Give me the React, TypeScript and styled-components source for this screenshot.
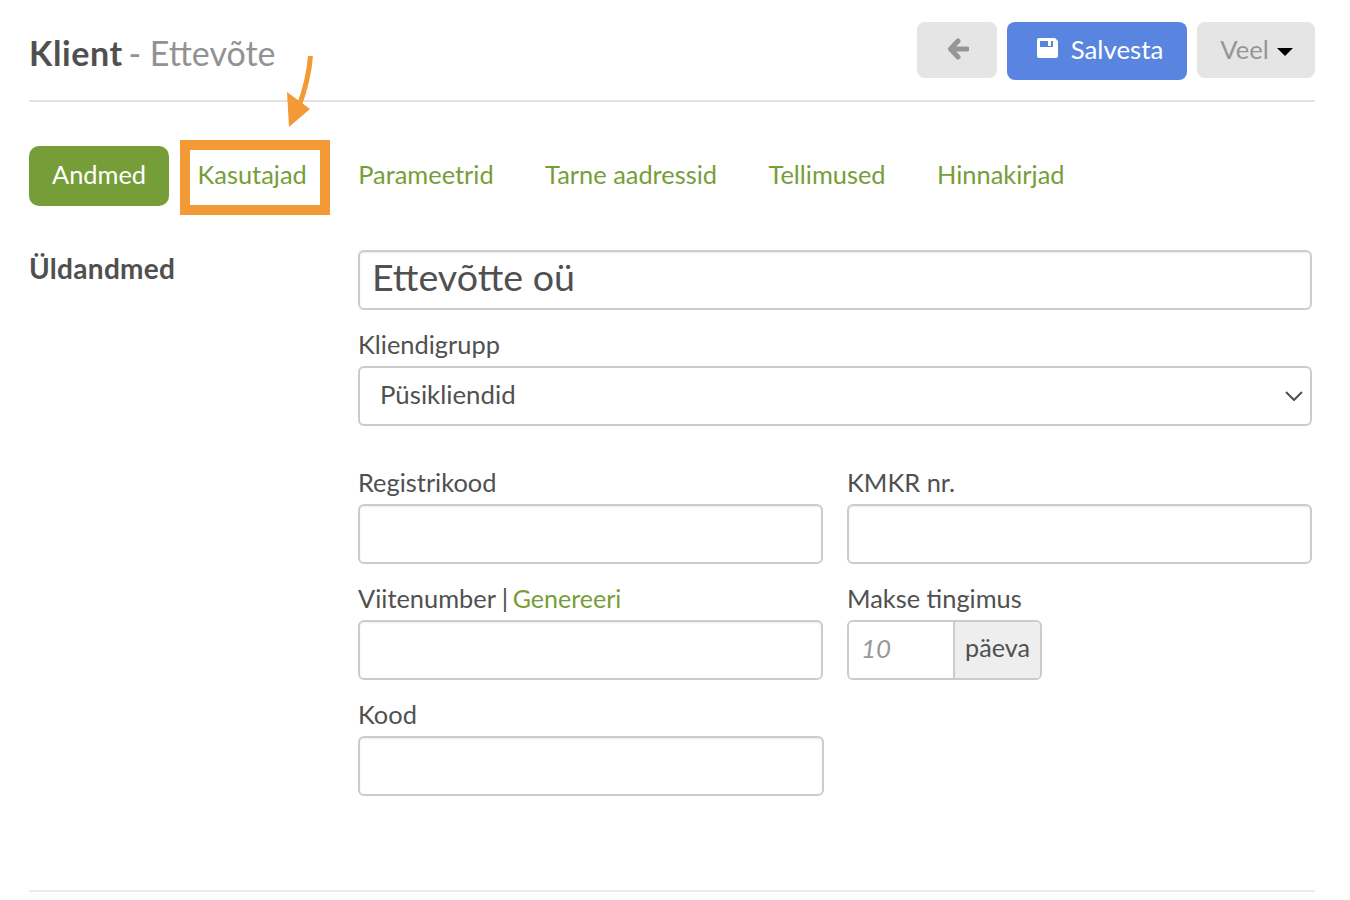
import { createGlobalStyle, styled } from 'styled-components';

const GlobalStyle = createGlobalStyle`
  html, body {
    margin: 0;
    background: #fff;
    overflow: hidden;
  }
  body {
    font-family: Lato, "Noto Sans", sans-serif;
    color: #505050;
  }
  * {
    box-sizing: border-box;
  }
`;

const TABS = ['Andmed', 'Kasutajad', 'Parameetrid', 'Tarne aadressid', 'Tellimused', 'Hinnakirjad'];

function App() {
  return (
    <Page>
      <GlobalStyle />
      <Header>
        <Title>
          <b>Klient</b>
          <TitleRest> - Ettevõte</TitleRest>
        </Title>
        <Actions>
          <GreyButton $width={80}>
            <svg width="22" height="22" viewBox="0 0 22 22">
              <path d="M11 3 L3.5 11 L11 19 M4 11 H20" fill="none" stroke="currentColor" strokeWidth="5" strokeLinejoin="round" strokeLinecap="round" />
            </svg>
          </GreyButton>
          <SaveButton>
            <svg width="21" height="20" viewBox="0 0 21 20">
              <path
                fillRule="evenodd"
                fill="currentColor"
                d="M2 0 H18 L21 3 V18 A2 2 0 0 1 19 20 H2 A2 2 0 0 1 0 18 V2 A2 2 0 0 1 2 0 Z M3 3 V9 H16 V3 Z"
              />
              <rect x="11" y="3" width="3" height="5" fill="currentColor" />
            </svg>
            Salvesta
          </SaveButton>
          <GreyButton $width={118}>
            Veel
            <Caret />
          </GreyButton>
        </Actions>
      </Header>

      <Tabs>
        {TABS.map((tab, i) => (
          <Tab key={tab} $active={i === 0}>
            {tab}
            {tab === 'Kasutajad' && (
              <>
                <Highlight />
                <Arrow width="40" height="85" viewBox="0 0 40 85">
                  <path d="M30.5 6 C29 25 25 40 19 56" fill="none" stroke="#f39a37" strokeWidth="5" />
                  <path d="M7 42 L30 59 L9 77 Z" fill="#f39a37" />
                </Arrow>
              </>
            )}
          </Tab>
        ))}
      </Tabs>

      <Content>
        <SectionTitle>Üldandmed</SectionTitle>
        <Form>
          <NameInput defaultValue="Ettevõtte oü" />
          <Field>
            <Label>Kliendigrupp</Label>
            <SelectBox>
              Püsikliendid
              <svg width="18" height="10" viewBox="0 0 18 10">
                <path d="M1 1 L9 9 L17 1" fill="none" stroke="#505050" strokeWidth="2" />
              </svg>
            </SelectBox>
          </Field>
          <Columns>
            <Field>
              <Label>Registrikood</Label>
              <TextInput />
            </Field>
            <Field>
              <Label>KMKR nr.</Label>
              <TextInput />
            </Field>
            <Field>
              <Label>
                Viitenumber | <GreenLink>Genereeri</GreenLink>
              </Label>
              <TextInput />
            </Field>
            <Field>
              <Label>Makse tingimus</Label>
              <InputGroup>
                <GroupInput placeholder="10" />
                <Addon>päeva</Addon>
              </InputGroup>
            </Field>
            <Field>
              <Label>Kood</Label>
              <CodeInput />
            </Field>
          </Columns>
        </Form>
      </Content>
      <Footer />
    </Page>
  );
}

const Page = styled.div`
  width: 1350px;
  height: 900px;
  padding: 0 35px 0 29px;
`;

const Header = styled.header`
  height: 102px;
  display: flex;
  justify-content: space-between;
  align-items: flex-start;
  border-bottom: 2px solid #e2e2e2;
`;

const Title = styled.h1`
  margin: 30px 0 0;
  font-size: 34px;
  line-height: 46px;
  font-weight: 400;
  color: #929292;

  > b {
    color: #505050;
    font-weight: 700;
    letter-spacing: 0.6px;
  }
`;

const TitleRest = styled.span`
  margin-left: -3px;
`;

const Actions = styled.div`
  display: flex;
  align-items: flex-start;
  gap: 10px;
  padding-top: 22px;
`;

const GreyButton = styled.button<{ $width: number }>`
  width: ${(p) => p.$width}px;
  height: 56px;
  display: flex;
  align-items: center;
  justify-content: center;
  gap: 8px;
  border: none;
  border-radius: 8px;
  background: #e5e5e5;
  color: #969696;
  font: 400 25.6px Lato, sans-serif;
  padding: 0 0 3px 1px;
`;

const SaveButton = styled.button`
  width: 180px;
  height: 58px;
  display: flex;
  align-items: center;
  justify-content: center;
  gap: 13px;
  border: none;
  border-radius: 8px;
  background: #5985e1;
  color: #fff;
  font: 400 25.8px Lato, sans-serif;
  padding: 0 0 5px 6px;

  > svg {
    margin-top: -1px;
  }
`;

const Caret = styled.span`
  width: 0;
  height: 0;
  margin-top: 6px;
  border-left: 8px solid transparent;
  border-right: 8px solid transparent;
  border-top: 8px solid #000;
`;

const Tabs = styled.nav`
  display: flex;
  gap: 5.5px;
  margin-top: 44px;
`;

const Tab = styled.a<{ $active?: boolean }>`
  position: relative;
  height: 60px;
  padding: 0 23px 4px;
  display: flex;
  align-items: center;
  border-radius: 10px;
  font-size: 25.4px;
  color: ${(p) => (p.$active ? '#fff' : '#769e38')};
  background: ${(p) => (p.$active ? '#769e38' : 'transparent')};
`;

const Highlight = styled.span`
  position: absolute;
  left: 5.5px;
  top: -6px;
  width: 150px;
  height: 75px;
  border: 10px solid #f39a37;
`;

const Arrow = styled.svg`
  position: absolute;
  left: 105px;
  top: -96px;
`;

const Content = styled.section`
  display: grid;
  grid-template-columns: 329px 954px;
  margin-top: 44px;
`;

const SectionTitle = styled.h2`
  margin: 0;
  font-size: 28px;
  line-height: 36px;
  font-weight: 700;
  letter-spacing: 0.3px;
`;

const Form = styled.div`
  display: flex;
  flex-direction: column;
  gap: 18px;
`;

const Field = styled.div`
  display: flex;
  flex-direction: column;
`;

const Label = styled.label`
  height: 38px;
  font-size: 25.4px;
  line-height: 32px;
`;

const GreenLink = styled.a`
  color: #769e38;
  font-size: 25px;
  margin-left: -2px;
`;

const inputStyles = `
  width: 100%;
  height: 60px;
  border: 2px solid #ccc;
  border-radius: 6px;
  background: #fff;
  outline: none;
  color: #505050;
  font-family: Lato, sans-serif;
  box-shadow: inset 0 1px 2px rgba(0, 0, 0, 0.08);
`;

const NameInput = styled.input`
  ${inputStyles}
  padding: 0 12px 7px;
  font-size: 37.6px;
`;

const TextInput = styled.input`
  ${inputStyles}
  padding: 0 12px;
  font-size: 26px;
`;

const CodeInput = styled(TextInput)`
  width: 466px;
`;

const SelectBox = styled.div`
  ${inputStyles}
  box-shadow: none;
  display: flex;
  align-items: center;
  justify-content: space-between;
  padding: 0 7px 4px 20px;
  font-size: 25.8px;

  > svg {
    margin-top: 4px;
  }
`;

const Columns = styled.div`
  display: grid;
  grid-template-columns: 465px 465px;
  column-gap: 24px;
  row-gap: 18px;
  margin-top: 22px;
`;

const InputGroup = styled.div`
  display: flex;
  width: 195px;
  height: 60px;
  border: 2px solid #ccc;
  border-radius: 6px;
  overflow: hidden;
`;

const GroupInput = styled.input`
  width: 104px;
  border: none;
  outline: none;
  padding: 0 12px 4px;
  font: italic 400 26px Lato, sans-serif;

  &::placeholder {
    color: #999;
    opacity: 1;
  }
`;

const Addon = styled.span`
  flex: 1;
  display: flex;
  align-items: center;
  justify-content: center;
  border-left: 2px solid #ccc;
  background: #eee;
  font-size: 25.2px;
  padding-bottom: 7px;
`;

const Footer = styled.div`
  margin-top: 94px;
  border-top: 2px solid #ebebeb;
`;

export default App;
